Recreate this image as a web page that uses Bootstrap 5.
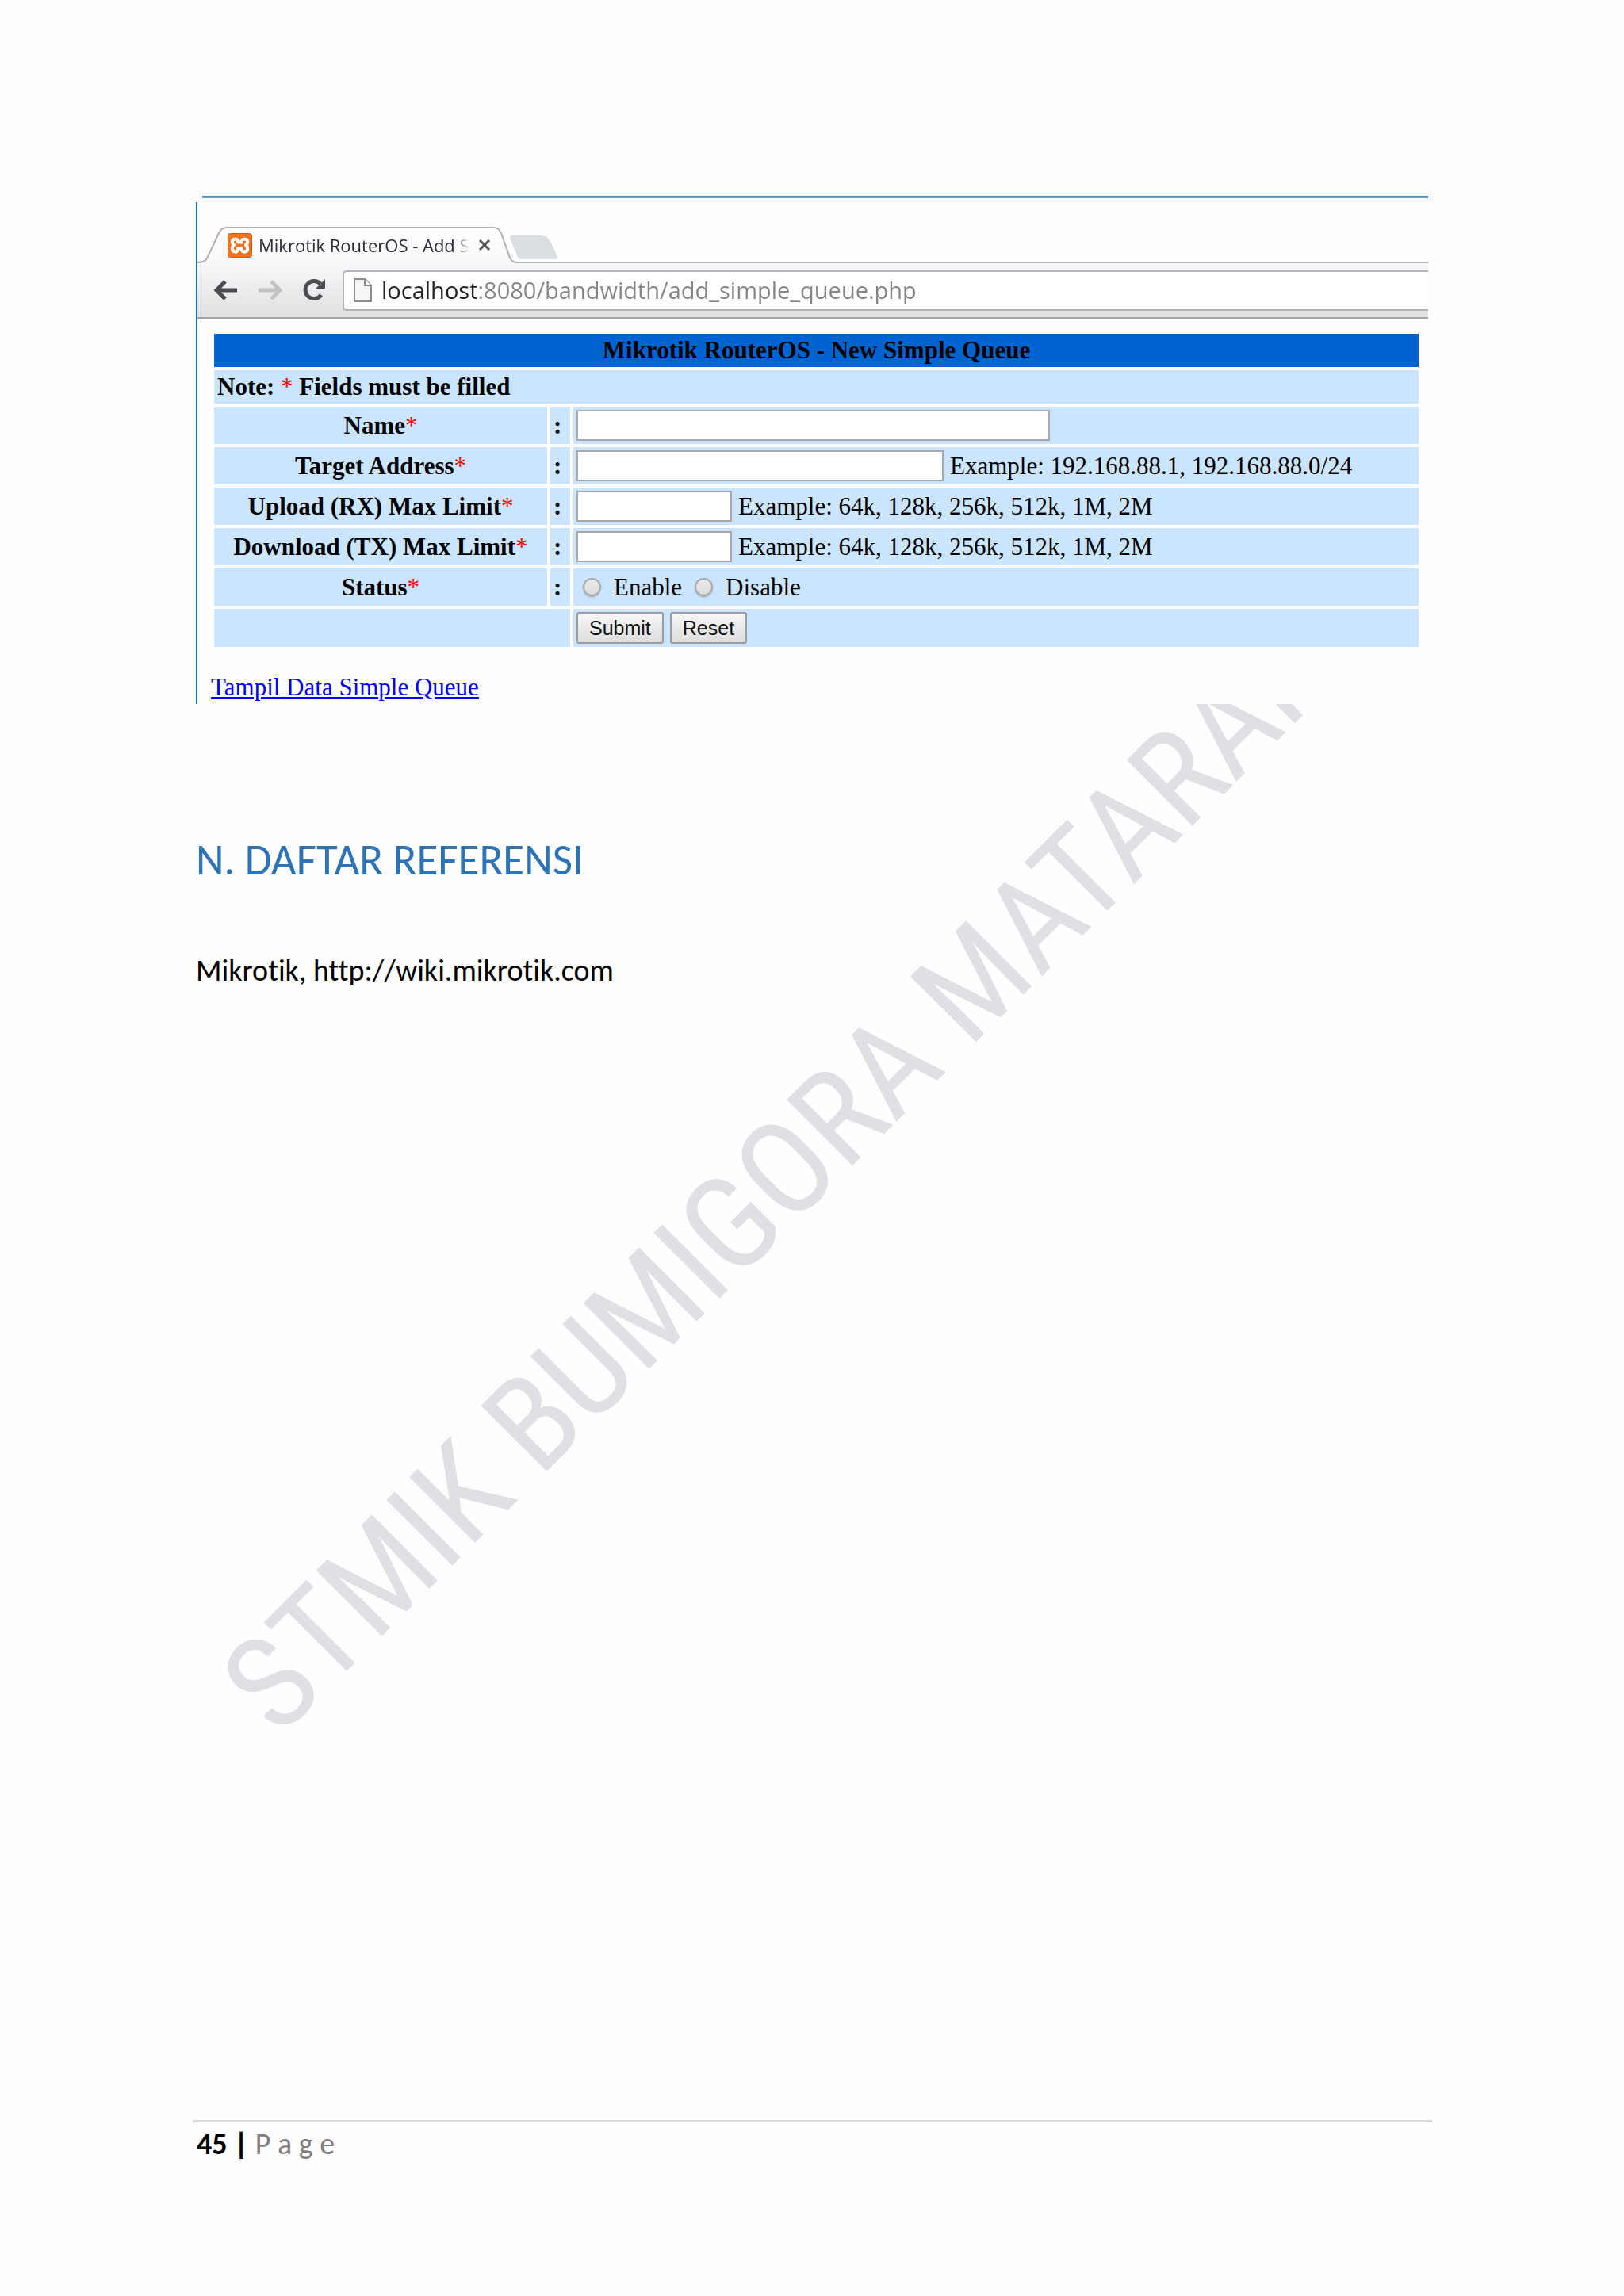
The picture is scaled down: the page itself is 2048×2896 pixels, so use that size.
<!DOCTYPE html>
<html lang="id">
<head>
<meta charset="utf-8">
<meta name="viewport" content="width=device-width, initial-scale=1">
<title>Mikrotik RouterOS - Add Simple Queue</title>
<link href="https://cdn.jsdelivr.net/npm/bootstrap@5.3.0/dist/css/bootstrap.min.css" rel="stylesheet">
<style>
body { background: #fefefe; color: #000; font-family: Carlito, Lato, sans-serif; }
.sheet { padding: 247px 247px 0; min-height: 100vh; overflow: hidden; isolation: isolate; }
.top-rule { height: 3px; margin-left: 8px; background: linear-gradient(#5aa0dc, #1d66b0, #8cc4f0); }
.capture { margin-top: 5px; height: 633px; background: #fefefe; border-left: 2px solid #1a78b8; }

.tab-strip { height: 77px; padding-top: 31px; }
.tab-shape { left: 0; top: 31px; z-index: 0; }
.tab-strip::after { content: ""; position: absolute; left: 400px; right: 0; bottom: 0; height: 2px; background: #b3b2b6; }
.tab-label { z-index: 1; height: 46px; padding-left: 38px; gap: 8px; }
.tab-title { width: 266px; overflow: hidden; white-space: nowrap; font: 22px/32px "Open Sans", sans-serif; color: #2b2b3a;
  -webkit-mask-image: linear-gradient(to right, #000 246px, transparent 266px); mask-image: linear-gradient(to right, #000 246px, transparent 266px); }
.plain-btn { border: 0; padding: 0; background: none; display: block; line-height: 0; }
.toolbar-row { height: 70px; padding: 9px 0 9px 20px; border-bottom: 2px solid #a5a4a8; background: linear-gradient(#f8f7f9, #e0dfe2); gap: 24px; }
.address { height: 51px; margin-left: -5px; padding-left: 12px; gap: 12px; background: #fff; border: 2px solid #b4b3b7; border-right: 0; border-radius: 5px 0 0 5px; }
.address input { flex: 1; min-width: 0; height: 44px; border: 0; padding: 0; outline: 0; font: 29px/44px "Open Sans", sans-serif;
  color: #858585; background: linear-gradient(to right, #222 120px, #858585 120px); -webkit-background-clip: text; background-clip: text; -webkit-text-fill-color: transparent; }

.web-page { padding: 15px 8px 0 17px; font: 31px/34px "Liberation Serif", "Times New Roman", serif; }
.queue-form { width: 100%; border-collapse: separate; border-spacing: 4px; table-layout: fixed; }
.queue-form th, .queue-form td { background: #cbe5ff; padding: 0 4px; height: 48px; vertical-align: middle; }
.queue-form th { text-align: center; }
.queue-form th.colon { text-align: left; }
.queue-form .title-cell { background: #0064d0; height: 42px; }
.queue-form .note-cell { height: 42px; text-align: left; }
.queue-form .entry > * { height: 47px; }
.queue-form label { display: inline-block; }
.star { color: #f00; font-weight: 400; }
.w-label { width: 420px; } .w-colon { width: 25px; }
.field { height: 39px; border: 2px solid #a9a9a9; background: #fff; padding: 0 4px; }
.f-name { width: 597px; } .f-target { width: 463px; } .f-limit { width: 196px; }
.dot-radio { appearance: none; width: 23px; height: 23px; margin: 0 16px 0 0; border: 2px solid #aaa; border-radius: 50%; background: linear-gradient(#e9e9e9, #dcdcdc); box-shadow: 0 1px 2px #9ab; }
.btn-old { height: 40px; padding: 0 14px; border: 2px solid #9c9c9c; border-radius: 3px; background: linear-gradient(#f6f6f6, #dddddd); color: #111; font: 25px/34px "Liberation Sans", Arial, sans-serif; }
.data-link { color: #0000ee; text-decoration: underline; margin-top: 30px; display: inline-block; }

.doc-heading { margin: 167px 0 0; font-size: 55px; font-weight: 400; line-height: 60px; color: #2e74b5; }
.doc-text { margin: 86px 0 0; font-size: 38px; line-height: 46px; font-variant-ligatures: none; }
.doc-foot { margin: 1427px -5px 0 -4px; padding: 7px 0 0 5px; border-top: 3px solid #d9d9d9; font-size: 38px; line-height: 40px; }
.page-word { color: #7f7f7f; }
.watermark { left: 370px; top: 2047px; z-index: -1; font: 400 165px/165px "Roboto Condensed", Carlito, Lato, sans-serif; white-space: nowrap; color: #e1dfe3; transform-origin: 0 100%; transform: rotate(-45deg); }
</style>
</head>
<body>
<main class="sheet position-relative">
  <div class="watermark position-absolute" aria-hidden="true">STMIK BUMIGORA MATARAM</div>
  <div class="top-rule"></div>
  <section class="capture">
    <div class="tab-strip position-relative">
      <svg class="tab-shape position-absolute" width="460" height="47" viewBox="0 0 460 47" aria-hidden="true">
        <defs><linearGradient id="tabfill" x1="0" y1="0" x2="0" y2="1"><stop offset="0" stop-color="#fff"/><stop offset="1" stop-color="#f8f7f9"/></linearGradient></defs>
        <path d="M394 14Q394 11 397 11H433Q441 11 444 17L453 35Q456 41 450 41H410Q405 41 403 36Z" fill="#d9dee1"/>
        <path d="M0 45Q9 45 12 40L27 8Q30 1 37 1H373Q380 1 383 8L394 39Q397 45 402 45V47H0Z" fill="url(#tabfill)"/>
        <path d="M0 45Q9 45 12 40L27 8Q30 1 37 1H373Q380 1 383 8L394 39Q397 45 402 45" fill="none" stroke="#b0afb3" stroke-width="2"/>
      </svg>
      <div class="tab-label position-relative d-flex align-items-center">
        <svg width="31" height="31" viewBox="0 0 31 31" aria-hidden="true"><rect x=".5" y=".5" width="30" height="30" rx="3" fill="#ee7422" stroke="#c45c18"/><path d="M9 7.500C5 8 5 13 8 15C5 18 5 22.500 9 23.500C12 24 13.500 22 13 19.500H18C17.500 22 19 24 22 23.500C26 22.500 26 18 23 15C26 13 26 8 22 7.500C19 7 17.500 9 18 11.500H13C13.500 9 12 7 9 7.500Z" fill="none" stroke="#fff" stroke-width="4" stroke-linejoin="round"/></svg>
        <span class="tab-title">Mikrotik RouterOS - Add S</span>
        <button type="button" class="plain-btn" aria-label="Tutup tab"><svg width="22" height="16" viewBox="0 0 22 16"><path d="M5 2L17 14M17 2L5 14" stroke="#555" stroke-width="3"/></svg></button>
      </div>
    </div>
    <div class="toolbar-row d-flex align-items-center">
      <button type="button" class="plain-btn" aria-label="Kembali"><svg width="32" height="30" viewBox="0 0 32 30"><path d="M30 15H5M15 4L4 15L15 26" fill="none" stroke="#4c4c50" stroke-width="5"/></svg></button>
      <button type="button" class="plain-btn" aria-label="Maju"><svg width="32" height="30" viewBox="0 0 32 30"><path d="M1 15H27M17 4L28 15L17 26" fill="none" stroke="#c3c3c6" stroke-width="5"/></svg></button>
      <button type="button" class="plain-btn" aria-label="Muat ulang"><svg width="32" height="30" viewBox="0 0 32 30"><path d="M24 21A11 11 0 1 1 23 7" fill="none" stroke="#4c4c50" stroke-width="5"/><path d="M29 1V13H17Z" fill="#4c4c50"/></svg></button>
      <div class="address d-flex align-items-center flex-grow-1">
        <svg width="23" height="30" viewBox="0 0 23 30" aria-hidden="true"><path d="M1 1H14L22 9V29H1Z" fill="#f6f6f6" stroke="#8b8b8f" stroke-width="2"/><path d="M14 1V9H22" fill="#fff" stroke="#8b8b8f" stroke-width="2"/></svg>
        <input type="text" aria-label="Alamat" value="localhost:8080/bandwidth/add_simple_queue.php">
      </div>
    </div>
    <form class="web-page" onsubmit="return false">
      <table class="queue-form">
        <colgroup><col class="w-label"><col class="w-colon"><col></colgroup>
        <tr><th class="title-cell" colspan="3">Mikrotik RouterOS - New Simple Queue</th></tr>
        <tr><th class="note-cell" colspan="3">Note: <span class="star">*</span> Fields must be filled</th></tr>
        <tr class="entry"><th><label for="qname">Name<span class="star">*</span></label></th><th class="colon">:</th><td><div class="d-flex align-items-center"><input class="field f-name" id="qname" type="text"></div></td></tr>
        <tr class="entry"><th><label for="qtarget">Target Address<span class="star">*</span></label></th><th class="colon">:</th><td><div class="d-flex align-items-center gap-2"><input class="field f-target" id="qtarget" type="text"><span>Example: 192.168.88.1, 192.168.88.0/24</span></div></td></tr>
        <tr class="entry"><th><label for="qup">Upload (RX) Max Limit<span class="star">*</span></label></th><th class="colon">:</th><td><div class="d-flex align-items-center gap-2"><input class="field f-limit" id="qup" type="text"><span>Example: 64k, 128k, 256k, 512k, 1M, 2M</span></div></td></tr>
        <tr class="entry"><th><label for="qdown">Download (TX) Max Limit<span class="star">*</span></label></th><th class="colon">:</th><td><div class="d-flex align-items-center gap-2"><input class="field f-limit" id="qdown" type="text"><span>Example: 64k, 128k, 256k, 512k, 1M, 2M</span></div></td></tr>
        <tr class="entry"><th>Status<span class="star">*</span></th><th class="colon">:</th><td><div class="d-flex align-items-center gap-3 ps-2"><label class="d-flex align-items-center"><input class="dot-radio" type="radio" name="status">Enable</label><label class="d-flex align-items-center"><input class="dot-radio" type="radio" name="status">Disable</label></div></td></tr>
        <tr><td colspan="2"></td><td><div class="d-flex align-items-center gap-2"><button class="btn-old" type="submit">Submit</button><button class="btn-old" type="reset">Reset</button></div></td></tr>
      </table>
      <a class="data-link" href="#">Tampil Data Simple Queue</a>
    </form>
  </section>
  <h1 class="doc-heading">N. DAFTAR REFERENSI</h1>
  <p class="doc-text">Mikrotik, http://wiki.mikrotik.com</p>
  <footer class="doc-foot"><b>45 |</b> <span class="page-word">P a g e</span></footer>
</main>
<script src="https://cdn.jsdelivr.net/npm/bootstrap@5.3.0/dist/js/bootstrap.bundle.min.js"></script>
</body>
</html>
